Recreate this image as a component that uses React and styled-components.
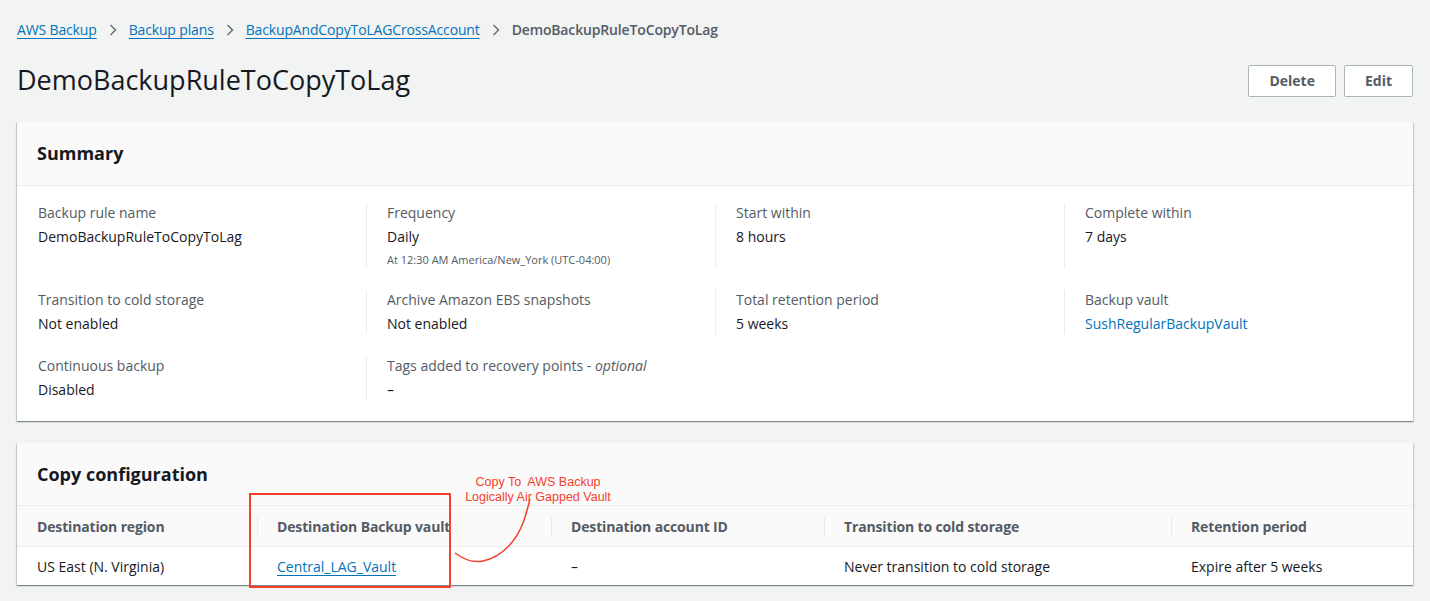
import React from 'react';
import styled, { createGlobalStyle } from 'styled-components';

// STYLES
const GlobalStyle = createGlobalStyle`
  body { margin: 0; background: #f2f3f3; font-family: "Open Sans", "Noto Sans", sans-serif; color: #16191f; }
`;

const Page = styled.div`padding: 20px 17px 20px 17px;`;

const Crumbs = styled.nav`display: flex; align-items: center; gap: 10px; font-size: 14px; line-height: 20px; letter-spacing: -0.15px;`;
const CrumbLink = styled.a`color: #0073bb; text-decoration: underline; text-underline-offset: 3px; cursor: pointer;`;
const CrumbCurrent = styled.span`color: #545b64; font-weight: 600;`;
const Chevron = styled.svg`width: 12px; height: 12px; display: block;`;

const HeaderRow = styled.div`display: flex; justify-content: space-between; align-items: center; margin-top: 22px; margin-bottom: 24px;`;
const Title = styled.h1`margin: 0; font-size: 27px; line-height: 36px; font-weight: 400; color: #16191f;`;
const Actions = styled.div`display: flex; gap: 8px; margin-top: 1px;`;
const Button = styled.button`
  height: 32px; padding: 0 20px; background: #fff; border: 1px solid #aab7b8; border-radius: 2px;
  font-family: inherit; font-size: 14px; font-weight: 700; color: #545b64; cursor: pointer;
`;

const Card = styled.section`
  background: #fff;
  box-shadow: 0 1px 1px 0 rgba(0, 28, 36, 0.3), 1px 1px 1px 0 rgba(0, 28, 36, 0.15), -1px 1px 1px 0 rgba(0, 28, 36, 0.15);
`;
const CardHeader = styled.div`
  background: #fafafa; border-bottom: 1px solid #eaeded; padding: 20px 20px ${p => (p.$tight ? '20px' : '21px')} 20px;
`;
const CardTitle = styled.h2`margin: 0; font-size: 18px; line-height: 22px; font-weight: 700; color: #16191f;`;

const SummaryGrid = styled.div`
  display: grid; grid-template-columns: repeat(4, 1fr); row-gap: 22px; padding: 17px 0 21px 0;
`;
const Cell = styled.div`
  padding-left: 20px;
  border-left: 1px solid ${p => (p.$first ? 'transparent' : '#eaeded')};
`;
const Label = styled.div`font-size: 14px; line-height: 20px; color: #545b64; margin-bottom: 4px;`;
const Value = styled.div`font-size: 14px; line-height: 20px; color: #16191f;`;
const SubValue = styled.div`font-size: 11px; line-height: 16px; color: #545b64; margin-top: 5px;`;
const ValueLink = styled.a`display: block; font-size: 14px; line-height: 20px; color: #0073bb; text-decoration: none;`;

const CopyWrap = styled.div`position: relative; margin-top: 22px;`;
const TableGrid = styled.div`display: grid; grid-template-columns: 240px 294px 273px 347px 1fr;`;
const Th = styled.div`
  position: relative; background: #fafafa; height: 40px; display: flex; align-items: center;
  padding-left: 20px; letter-spacing: -0.15px;
  font-size: 14px; font-weight: 700; color: #545b64;
  &::before {
    content: ''; position: absolute; left: 0; top: 10px; bottom: 10px;
    border-left: 1px solid ${p => (p.$first ? 'transparent' : '#eaeded')};
  }
`;
const Td = styled.div`
  height: 39px; display: flex; align-items: center; padding-left: 20px;
  font-size: 14px; color: #16191f; border-top: 1px solid #eaeded; box-sizing: border-box;
`;
const TdLink = styled.a`color: #0073bb; text-decoration: underline; text-underline-offset: 3px;`;

const Callout = styled.div`
  position: absolute; left: 232px; top: 50px; width: 202px; height: 95px;
  border: 2px solid #f5402c; box-sizing: border-box; pointer-events: none;
`;
const CalloutText = styled.div`
  position: absolute; left: 436px; top: 32px; width: 170px; text-align: center;
  font-family: "Liberation Sans", Arial, sans-serif; font-size: 12.5px; line-height: 15px; color: #f5402c;
`;
const CalloutCurve = styled.svg`position: absolute; left: 0; top: 0; overflow: visible; pointer-events: none;`;

const ChevronIcon = () => (
  <Chevron viewBox="0 0 12 12">
    <polyline points="3.5,1 8.5,6 3.5,11" fill="none" stroke="#687078" strokeWidth="1.5" />
  </Chevron>
);

const summary = [
  [
    { label: 'Backup rule name', value: 'DemoBackupRuleToCopyToLag' },
    { label: 'Frequency', value: 'Daily', sub: 'At 12:30 AM America/New_York (UTC-04:00)' },
    { label: 'Start within', value: '8 hours' },
    { label: 'Complete within', value: '7 days' },
  ],
  [
    { label: 'Transition to cold storage', value: 'Not enabled' },
    { label: 'Archive Amazon EBS snapshots', value: 'Not enabled' },
    { label: 'Total retention period', value: '5 weeks' },
    { label: 'Backup vault', link: 'SushRegularBackupVault' },
  ],
  [
    { label: 'Continuous backup', value: 'Disabled' },
    { label: <>Tags added to recovery points - <i>optional</i></>, value: '–' },
  ],
];

export default function App() {
  return (
    <Page>
      <GlobalStyle />
      <Crumbs>
        <CrumbLink>AWS Backup</CrumbLink>
        <ChevronIcon />
        <CrumbLink>Backup plans</CrumbLink>
        <ChevronIcon />
        <CrumbLink>BackupAndCopyToLAGCrossAccount</CrumbLink>
        <ChevronIcon />
        <CrumbCurrent>DemoBackupRuleToCopyToLag</CrumbCurrent>
      </Crumbs>

      <HeaderRow>
        <Title>DemoBackupRuleToCopyToLag</Title>
        <Actions>
          <Button>Delete</Button>
          <Button>Edit</Button>
        </Actions>
      </HeaderRow>

      <Card>
        <CardHeader>
          <CardTitle>Summary</CardTitle>
        </CardHeader>
        <SummaryGrid>
          {summary.map((row, r) =>
            row.map((c, i) => (
              <Cell key={`${r}-${i}`} $first={i === 0}>
                <Label>{c.label}</Label>
                {c.link ? <ValueLink>{c.link}</ValueLink> : <Value>{c.value}</Value>}
                {c.sub && <SubValue>{c.sub}</SubValue>}
              </Cell>
            ))
          )}
        </SummaryGrid>
      </Card>

      <CopyWrap>
        <Card>
          <CardHeader $tight>
            <CardTitle>Copy configuration</CardTitle>
          </CardHeader>
          <TableGrid>
            <Th $first>Destination region</Th>
            <Th>Destination Backup vault</Th>
            <Th>Destination account ID</Th>
            <Th>Transition to cold storage</Th>
            <Th>Retention period</Th>
            <Td>US East (N. Virginia)</Td>
            <Td><TdLink>Central_LAG_Vault</TdLink></Td>
            <Td>–</Td>
            <Td>Never transition to cold storage</Td>
            <Td>Expire after 5 weeks</Td>
          </TableGrid>
        </Card>
        <Callout />
        <CalloutText>Copy To&nbsp; AWS Backup<br />Logically Air Gapped Vault</CalloutText>
        <CalloutCurve width="1" height="1">
          <path d="M438 110 C446 116 456 120 466 118 C486 114 500 96 506 80 C509 72 511 64 513 56" fill="none" stroke="#f5402c" strokeWidth="1.5" />
        </CalloutCurve>
      </CopyWrap>
    </Page>
  );
}
